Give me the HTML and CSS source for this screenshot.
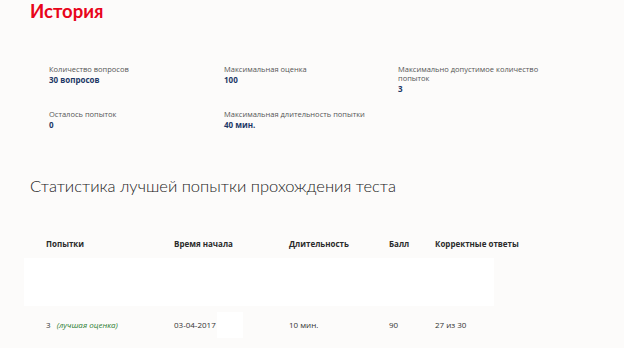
FILE: index.html
```html
<!DOCTYPE html>
<html lang="ru">
<head>
  <meta charset="UTF-8" />
  <meta name="viewport" content="width=device-width, initial-scale=1.0" />
  <title>История</title>
  <link rel="stylesheet" href="styles.css">
</head>
<body>
  <div class="page">
    <h1 class="page-title">История</h1>

    <div class="info-grid">
      <div class="info-item">
        <div class="info-label">Количество вопросов</div>
        <div class="info-value">30 вопросов</div>
      </div>
      <div class="info-item">
        <div class="info-label">Максимальная оценка</div>
        <div class="info-value">100</div>
      </div>
      <div class="info-item">
        <div class="info-label">Максимально допустимое количество попыток</div>
        <div class="info-value">3</div>
      </div>
      <div class="info-item">
        <div class="info-label">Осталось попыток</div>
        <div class="info-value">0</div>
      </div>
      <div class="info-item">
        <div class="info-label">Максимальная длительность попытки</div>
        <div class="info-value">40 мин.</div>
      </div>
    </div>

    <h2 class="stats-title">Статистика лучшей попытки прохождения теста</h2>

    <div class="attempts">
      <div class="attempts-row attempts-head">
        <div>Попытки</div>
        <div>Время начала</div>
        <div>Длительность</div>
        <div>Балл</div>
        <div>Корректные ответы</div>
      </div>
      <div class="attempts-blank"></div>
      <div class="attempts-row attempts-data">
        <div>3 <em class="best">(лучшая оценка)</em></div>
        <div class="date-cell">03-04-2017<span class="time-mask"></span></div>
        <div>10 мин.</div>
        <div>90</div>
        <div>27 из 30</div>
      </div>
    </div>
  </div>
</body>
</html>
```

FILE: styles.css
```css
body {
  margin: 0;
  background-color: #fcfbfa;
  font-family: "Open Sans", "Noto Sans", sans-serif;
  color: #333;
}
.page {
  padding: 0 0 0 30px;
}
.page-title {
  margin: 0;
  font-family: Lato, "Open Sans", sans-serif;
  font-size: 18.5px;
  line-height: 22px;
  font-weight: 700;
  color: #e8051b;
}
.info-grid {
  display: grid;
  grid-template-columns: 175px 174px 150px;
  row-gap: 16px;
  margin: 43px 0 0 19px;
}
.info-label {
  font-size: 7.5px;
  line-height: 9px;
  color: #555;
}
.info-value {
  font-size: 8px;
  line-height: 11px;
  font-weight: 700;
  color: #1d3867;
}
.stats-title {
  margin: 45px 0 0;
  font-family: Lato, "Open Sans", sans-serif;
  font-size: 16.5px;
  line-height: 22px;
  font-weight: 300;
  color: #222;
}
.attempts {
  margin: 41px 0 0 -6px;
}
.attempts-row {
  display: grid;
  grid-template-columns: 128px 115px 100px 46px auto;
  align-items: center;
  padding-left: 22px;
  font-size: 8px;
  line-height: 12px;
  color: #333;
}
.attempts-head {
  font-weight: 700;
  color: #2b2b2b;
}
.attempts-blank {
  width: 470px;
  height: 48px;
  margin: 8px 0 6px;
  background-color: #fff;
}
.attempts-data .best {
  margin-left: 4px;
  color: #2e7d32;
}
.date-cell {
  display: flex;
  align-items: center;
}
.time-mask {
  width: 26px;
  height: 26px;
  margin-left: 1px;
  background-color: #fff;
}
```
